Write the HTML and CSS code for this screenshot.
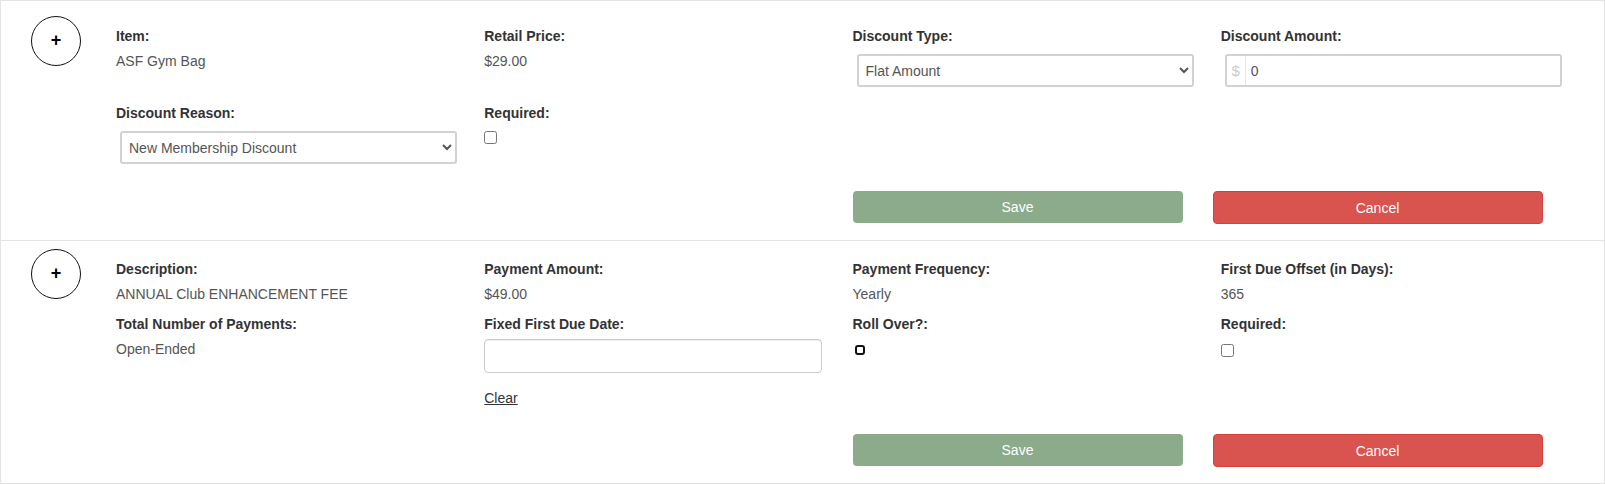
FILE: index.html
```html
<!DOCTYPE html>
<html lang="en">

<head>
    <meta charset="UTF-8">
    <meta name="viewport" content="width=device-width, initial-scale=1.0">
    <title>Membership Add-Ons</title>
    <link rel="stylesheet" href="styles.css">
</head>

<body>

    <div class="panel">

        <!-- Point of sale item being discounted -->
        <div class="entry entry-first">
            <button class="toggle" type="button">+</button>
            <div class="fields">
                <div class="field-grid">
                    <div class="field">
                        <label>Item:</label>
                        <p class="value">ASF Gym Bag</p>
                    </div>
                    <div class="field">
                        <label>Retail Price:</label>
                        <p class="value">$29.00</p>
                    </div>
                    <div class="field">
                        <label for="discountType">Discount Type:</label>
                        <select id="discountType" class="control">
                            <option>Flat Amount</option>
                            <option>Percentage</option>
                        </select>
                    </div>
                    <div class="field">
                        <label for="discountAmount">Discount Amount:</label>
                        <div class="control input-group">
                            <span class="addon">$</span>
                            <input type="text" id="discountAmount" value="0">
                        </div>
                    </div>
                    <div class="field">
                        <label for="discountReason">Discount Reason:</label>
                        <select id="discountReason" class="control">
                            <option>New Membership Discount</option>
                            <option>Promotion</option>
                        </select>
                    </div>
                    <div class="field">
                        <label>Required:</label>
                        <input type="checkbox" class="check">
                    </div>
                </div>
                <div class="actions">
                    <button class="btn btn-save" type="button">Save</button>
                    <button class="btn btn-cancel" type="button">Cancel</button>
                </div>
            </div>
        </div>

        <!-- Recurring fee -->
        <div class="entry">
            <button class="toggle" type="button">+</button>
            <div class="fields">
                <div class="field-grid">
                    <div class="field">
                        <label>Description:</label>
                        <p class="value">ANNUAL Club ENHANCEMENT FEE</p>
                    </div>
                    <div class="field">
                        <label>Payment Amount:</label>
                        <p class="value">$49.00</p>
                    </div>
                    <div class="field">
                        <label>Payment Frequency:</label>
                        <p class="value">Yearly</p>
                    </div>
                    <div class="field">
                        <label>First Due Offset (in Days):</label>
                        <p class="value">365</p>
                    </div>
                    <div class="field">
                        <label>Total Number of Payments:</label>
                        <p class="value">Open-Ended</p>
                    </div>
                    <div class="field">
                        <label for="firstDueDate">Fixed First Due Date:</label>
                        <input type="text" id="firstDueDate" class="date-input">
                        <a href="#" class="clear-link">Clear</a>
                    </div>
                    <div class="field">
                        <label>Roll Over?:</label>
                        <input type="checkbox" class="check check-focus">
                    </div>
                    <div class="field">
                        <label>Required:</label>
                        <input type="checkbox" class="check check-low">
                    </div>
                </div>
                <div class="actions">
                    <button class="btn btn-save" type="button">Save</button>
                    <button class="btn btn-cancel" type="button">Cancel</button>
                </div>
            </div>
        </div>

    </div>

</body>

</html>
```

FILE: styles.css
```css
* {
    box-sizing: border-box;
}

body {
    margin: 0;
    font-family: 'Liberation Sans', Arial, sans-serif;
    font-size: 14px;
    line-height: 20px;
    color: #333;
    background-color: #fff;
}

.panel {
    border: 1px solid #e3e3e3;
}

.entry {
    display: flex;
    align-items: flex-start;
    padding: 8px 0 17px 30px;
    border-bottom: 1px solid #e3e3e3;
}

.entry:last-child {
    border-bottom: none;
}

.entry-first {
    padding-top: 15px;
}

.toggle {
    flex: none;
    width: 50px;
    height: 50px;
    margin: 0 35px 0 0;
    padding: 0 0 2px;
    border: 1px solid #111;
    border-radius: 50%;
    background: #fff;
    color: #000;
    font-family: 'Liberation Sans', Arial, sans-serif;
    font-size: 18px;
    font-weight: bold;
    line-height: 1;
    cursor: pointer;
}

.fields {
    width: 1443px;
    padding-top: 10px;
}

.field-grid {
    display: grid;
    grid-template-columns: repeat(4, minmax(0, 1fr));
    column-gap: 30px;
    align-items: start;
}

/* column so the label and control margins add up instead of collapsing */
.field {
    display: flex;
    flex-direction: column;
    align-items: flex-start;
}

.field label {
    display: block;
    margin-bottom: 5px;
    font-weight: bold;
    color: #333;
}

.value {
    margin: 0 0 10px;
    color: #555;
}

/* selects and the amount box in the discount row */
.control {
    display: block;
    width: 337px;
    height: 33px;
    margin: 3px 0 16px 4px;
    border: 2px solid #d2d2d2;
    border-radius: 3px;
    background-color: #fff;
    font-family: inherit;
    font-size: 14px;
    color: #555;
}

select.control {
    padding: 0 3px;
}

.input-group {
    display: flex;
}

.addon {
    flex: none;
    width: 19px;
    border-right: 1px solid #e6e6e6;
    color: #ccc;
    font-size: 15px;
    line-height: 29px;
    text-align: center;
}

.input-group input {
    flex: 1;
    min-width: 0;
    border: none;
    padding: 0 5px;
    font-family: inherit;
    font-size: 14px;
    color: #555;
    background: transparent;
    outline: none;
}

.date-input {
    display: block;
    width: 338px;
    height: 34px;
    margin-bottom: 15px;
    padding: 6px 12px;
    border: 1px solid #ccc;
    border-radius: 4px;
    box-shadow: inset 0 1px 1px rgba(0, 0, 0, 0.075);
    font-family: inherit;
    font-size: 14px;
}

.clear-link {
    display: inline-block;
    margin-bottom: 15px;
    color: #333;
    text-decoration: underline;
}

.check {
    display: block;
    width: 13px;
    height: 13px;
    margin: 3px 0 0;
}

.check-low {
    margin-top: 5px;
}

/* the checkbox that currently has keyboard focus */
.check-focus {
    appearance: none;
    width: 10px;
    height: 10px;
    margin: 6px 0 0 2px;
    border: 2px solid #111;
    border-radius: 3px;
    background: #fff;
}

/* Save / Cancel sit under the last two columns */
.actions {
    display: flex;
    align-items: flex-start;
    gap: 30px;
    height: 32px;
    margin: 11px 0 0 736.5px;
}

.btn {
    width: 330px;
    height: 32px;
    padding: 0;
    border: none;
    border-radius: 4px;
    color: #fff;
    font-family: inherit;
    font-size: 14px;
    cursor: pointer;
}

.btn-save {
    background-color: #8bab8b;
}

.btn-cancel {
    height: 33px;
    background-color: #d9534f;
    border: 1px solid #d43f3a;
}
```
